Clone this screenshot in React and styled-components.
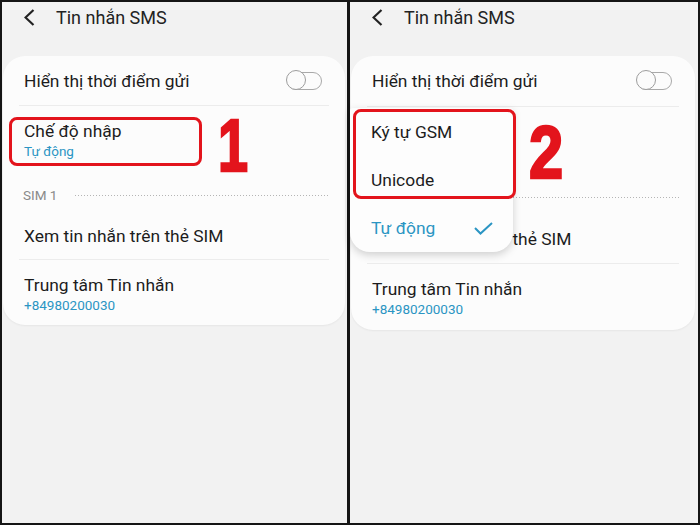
import React from "react";
import styled, { createGlobalStyle } from "styled-components";

const GlobalStyle = createGlobalStyle`
  html, body { margin: 0; padding: 0; background: #f2f2f2; }
  body { font-family: Roboto, "Noto Sans", "Liberation Sans", sans-serif; }
`;

const Frame = styled.div`
  width: 700px;
  height: 525px;
  box-sizing: border-box;
  border: 2px solid #151515;
  display: flex;
  background: #f2f2f2;
  overflow: hidden;
`;

const Panel = styled.div`
  position: relative;
  flex: none;
  width: ${(p) => p.$w}px;
  --s: ${(p) => p.$s};
`;

const Split = styled.div`
  flex: none;
  width: 3px;
  background: #151515;
`;

const Header = styled.div`
  display: flex;
  align-items: center;
  height: 30px;
  padding-left: 22px;
  gap: 21px;
  margin-bottom: 24px;
`;

const Title = styled.div`
  font-size: 18px;
  color: #222;
`;

const Card = styled.div`
  margin: 0 ${(p) => p.$mr}px 0 1px;
  background: #fcfcfc;
  border-radius: 22px;
  box-shadow: 0 1px 2px rgba(0, 0, 0, 0.05);
  padding: 0 16px;
`;

const Row = styled.div`
  display: flex;
  align-items: center;
  justify-content: space-between;
  height: calc(${(p) => p.$h}px * var(--s));
  padding: 0 5px;
  box-sizing: border-box;
`;

const StackRow = styled.div`
  display: flex;
  flex-direction: column;
  height: calc(${(p) => p.$h}px * var(--s));
  padding: calc(14px * var(--s)) 5px 0;
  box-sizing: border-box;
`;

const Label = styled.div`
  font-size: 17.4px;
  line-height: 22px;
  color: #1c1c1c;
  white-space: nowrap;
`;

const Sub = styled.div`
  font-size: 13.5px;
  line-height: 18px;
  color: #2b95c3;
`;

const Rule = styled.div`
  height: 1px;
  background: #ececec;
`;

const SimHeader = styled.div`
  display: flex;
  align-items: center;
  gap: 18px;
  height: calc(42px * var(--s));
  padding: calc(8px * var(--s)) 0 0 4px;
  box-sizing: border-box;
`;

const SimText = styled.div`
  font-size: 13.5px;
  color: #8a8a8a;
`;

const Dots = styled.div`
  flex: 1;
  height: 1px;
  background-image: linear-gradient(to right, #b5b5b5 1px, transparent 1px);
  background-size: 3px 1px;
`;

const Toggle = styled.div`
  position: relative;
  width: 35px;
  height: 18px;
  box-sizing: border-box;
  border: 1.5px solid #a9a9a9;
  border-radius: 9px;
  margin-right: 2px;
  &::before {
    content: "";
    position: absolute;
    left: -2px;
    top: -2.5px;
    width: 20px;
    height: 20px;
    box-sizing: border-box;
    border-radius: 50%;
    border: 1.5px solid #9d9d9d;
    background: #fbfbfb;
  }
`;

const Popup = styled.div`
  position: absolute;
  left: 0;
  top: 106px;
  width: 163px;
  background: #fdfdfd;
  border-radius: 3px 3px 20px 20px;
  box-shadow: 0 3px 8px rgba(0, 0, 0, 0.18);
`;

const Option = styled.div`
  display: flex;
  align-items: center;
  justify-content: space-between;
  height: 48px;
  padding: 0 20px 0 21px;
  font-size: 17.4px;
  color: ${(p) => (p.$active ? "#2b95c3" : "#1c1c1c")};
`;

const RedBox = styled.div`
  position: absolute;
  left: ${(p) => p.$x}px;
  top: ${(p) => p.$y}px;
  width: ${(p) => p.$w}px;
  height: ${(p) => p.$h}px;
  box-sizing: border-box;
  border: 3px solid #e3141c;
  border-radius: 8px;
`;

const Digit = styled.span`
  position: absolute;
  left: ${(p) => p.$x}px;
  top: ${(p) => p.$y}px;
  font-family: "Liberation Sans", Arial, sans-serif;
  font-weight: 700;
  font-size: 75px;
  line-height: 1;
  color: #e3141c;
  -webkit-text-stroke: 2.5px #e3141c;
  transform: scaleX(${(p) => p.$sx});
  transform-origin: left top;
`;

const Back = () => (
  <svg width="11" height="17" viewBox="0 0 11 17">
    <polyline points="9.5,1 1.5,8.5 9.5,16" fill="none" stroke="#222" strokeWidth="2.2" />
  </svg>
);

const Check = () => (
  <svg width="19" height="13" viewBox="0 0 19 13">
    <polyline points="1,6 6.5,11.5 18,1" fill="none" stroke="#2b95c3" strokeWidth="2" />
  </svg>
);

const Screen = ({ w, s, mr, children }) => (
  <Panel $w={w} $s={s}>
    <Header>
      <Back />
      <Title>Tin nhắn SMS</Title>
    </Header>
    <Card $mr={mr}>
      <Row $h={49}>
        <Label>Hiển thị thời điểm gửi</Label>
        <Toggle />
      </Row>
      <Rule />
      <StackRow $h={64}>
        <Label>Chế độ nhập</Label>
        <Sub>Tự động</Sub>
      </StackRow>
      <SimHeader>
        <SimText>SIM 1</SimText>
        <Dots />
      </SimHeader>
      <Row $h={47}>
        <Label>Xem tin nhắn trên thẻ SIM</Label>
      </Row>
      <Rule />
      <StackRow $h={65}>
        <Label>Trung tâm Tin nhắn</Label>
        <Sub>+84980200030</Sub>
      </StackRow>
    </Card>
    {children}
  </Panel>
);

export default function App() {
  return (
    <>
      <GlobalStyle />
      <Frame>
        <Screen w={345} s={1} mr={2}>
          <RedBox $x={7} $y={115} $w={193} $h={49} />
          <Digit $x={216} $y={106} $sx={0.72}>1</Digit>
        </Screen>
        <Split />
        <Screen w={348} s={1.0186} mr={3}>
          <Popup>
            <Option>Ký tự GSM</Option>
            <Option>Unicode</Option>
            <Option $active>
              Tự động
              <Check />
            </Option>
          </Popup>
          <RedBox $x={3} $y={107} $w={163} $h={90} />
          <Digit $x={179} $y={113} $sx={0.82}>2</Digit>
        </Screen>
      </Frame>
    </>
  );
}
